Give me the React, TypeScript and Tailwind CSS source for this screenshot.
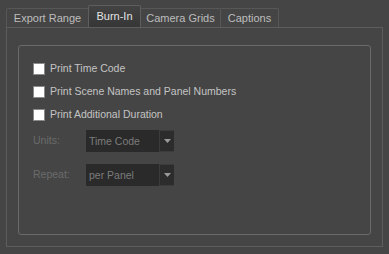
const tabs = ["Export Range", "Burn-In", "Camera Grids", "Captions"];
const tabWidths = ["w-[83px]", "w-[53px]", "w-[81px]", "w-[59px]"];

const options = [
  "Print Time Code",
  "Print Scene Names and Panel Numbers",
  "Print Additional Duration",
];

function Combo({ label, value }: { label: string; value: string }) {
  return (
    <div className="flex items-center h-[22px]">
      <span className="w-[53px] text-[#6b6b6b]">{label}</span>
      <div className="flex h-[22px] bg-[#3c3c3c]">
        <div className="w-[73px] h-[22px] bg-[#2a2a2a] pl-[3px] leading-[22px] text-[#7c7c7c]">
          {value}
        </div>
        <div className="ml-[1px] w-[14px] h-[20px] mt-[1px] bg-[#2c2c2c] flex items-center justify-center">
          <svg width="7" height="4" viewBox="0 0 7 4">
            <path d="M0 0h7L3.5 4z" fill="#9a9a9a" />
          </svg>
        </div>
      </div>
    </div>
  );
}

export default function App() {
  return (
    <div
      className="w-[389px] h-[254px] bg-[#454545] pt-[5px] pl-[6px] text-[10.5px]"
      style={{ fontFamily: "'Liberation Sans', Arial, sans-serif" }}
    >
      <div className="flex items-end h-[22px] text-[11px]">
        {tabs.map((tab, i) => {
          const active = tab === "Burn-In";
          return (
            <div
              key={tab}
              className={`${tabWidths[i]} flex items-center justify-center border border-b-0 rounded-t-[2px] ${
                active
                  ? "h-[22px] border-[#5e5e5e] bg-gradient-to-b from-[#434343] to-[#363636] text-[#e4e4e4] -mr-px z-10"
                  : "h-[19px] border-[#575757] bg-[#454545] text-[#bdbdbd] -mr-px"
              }`}
            >
              {tab}
            </div>
          );
        })}
      </div>
      <div className="w-[377px] h-[220px] border border-[#5d5d5d] px-[11px] pt-[17px] pb-[11px]">
        <div className="h-full border border-[#6a6a6a] rounded-[3px] pl-[14px] pt-[16px]">
          <div className="flex flex-col gap-[10px]">
            {options.map((opt) => (
              <label key={opt} className="flex items-center gap-[5px] h-[13px] text-[#c4c4c4]">
                <span className="w-[12px] h-[12px] bg-white border border-[#8a8a8a]" />
                {opt}
              </label>
            ))}
          </div>
          <div className="mt-[9px] flex flex-col gap-[12px]">
            <Combo label="Units:" value="Time Code" />
            <Combo label="Repeat:" value="per Panel" />
          </div>
        </div>
      </div>
    </div>
  );
}
